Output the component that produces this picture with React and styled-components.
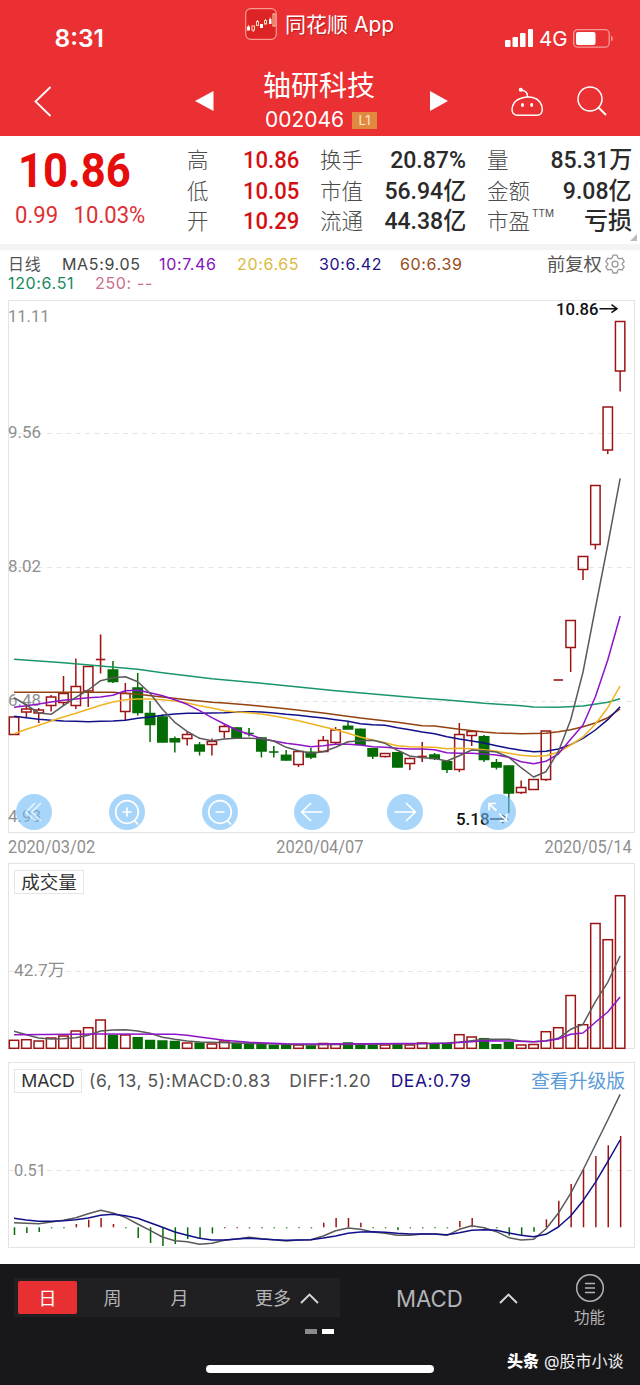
import React from 'react';
import styled, { createGlobalStyle } from 'styled-components';

const GlobalStyle = createGlobalStyle`
  * { box-sizing: border-box; }
  body { margin: 0; background: #fff; }
`;

const ui = "Inter, 'Noto Sans CJK SC', sans-serif";
const din = "Roboto, 'Noto Sans CJK SC', sans-serif";

const RED = '#9c1414';
const GREEN = '#046c04';
const STEP = 12.37;
const xAt = (i) => 14 + i * STEP;

const Screen = styled.div`
  width: 640px;
  height: 1385px;
  display: flex;
  flex-direction: column;
  background: #fff;
  font-family: ${ui};
  overflow: hidden;
  white-space: nowrap;
`;

/* ---------- header ---------- */

const Header = styled.header`
  height: 136px;
  flex: none;
  background: #ea3033;
  color: #fff;
  display: flex;
  flex-direction: column;
`;

const StatusBar = styled.div`
  height: 64px;
  display: grid;
  grid-template-columns: 245px 259px 1fr;
`;

const Clock = styled.div`
  padding: 24px 0 0 54.5px;
  font-size: 24.5px;
  line-height: 29px;
  font-weight: 600;
`;

const Brand = styled.div`
  display: flex;
  align-items: flex-start;
  gap: 8px;
  padding-top: 8px;
`;

const BrandName = styled.span`
  font-size: 21px;
  line-height: 33px;
  text-shadow: 1px 1px 1px rgba(90, 0, 0, 0.35);
`;

const Signals = styled.div`
  display: flex;
  align-items: flex-start;
  padding-top: 28px;
`;

const Network = styled.span`
  font-size: 20.5px;
  line-height: 22px;
  width: 28px;
  margin: 0 6px 0 5px;
`;

const NavBar = styled.div`
  height: 72px;
  display: grid;
  grid-template-columns: 34px 161px 68px 112px 55px 81px 66px 1fr;
`;

const NavIcon = styled.svg`
  display: block;
  grid-column: ${(p) => p.$col};
  margin-top: ${(p) => p.$top}px;
  overflow: visible;
`;

const StockTitle = styled.div`
  grid-column: 4;
  display: flex;
  flex-direction: column;
  align-items: center;
`;

const StockName = styled.div`
  margin-top: 6px;
  font-size: 28px;
  line-height: 33px;
`;

const StockCode = styled.div`
  display: flex;
  align-items: center;
  margin: 4px -4px 0 0;
  font-size: 21px;
  line-height: 26px;
  gap: 8px;
`;

const LevelBadge = styled.span`
  width: 25px;
  height: 17px;
  background: #e0893f;
  color: #ffe9cf;
  font-size: 13px;
  line-height: 17px;
  text-align: center;
`;

/* ---------- quote ---------- */

const Quote = styled.section`
  height: 108px;
  flex: none;
  display: grid;
  grid-template-columns: 187px 112px 167px 166px;
  position: relative;
  font-family: ${din};
`;

const PriceBlock = styled.div`
  display: flex;
  flex-direction: column;
`;

const Squeeze = styled.span`
  display: inline-block;
  transform: scaleX(${(p) => p.$x});
  transform-origin: ${(p) => p.$origin || 'right'} center;
`;

const Price = styled.div`
  margin: 6px 0 0 18px;
  font-size: 49px;
  line-height: 58px;
  font-weight: 700;
  color: #e60d0d;
`;

const Change = styled.div`
  margin: 1px 0 0 15px;
  font-size: 23px;
  line-height: 30px;
  font-weight: 400;
  color: #dd3035;
  word-spacing: 10.5px;
`;

const StatColumn = styled.div`
  display: flex;
  flex-direction: column;
  padding: 8px 0 0 ${(p) => p.$indent || 0}px;
`;

const Stat = styled.div`
  display: flex;
  justify-content: space-between;
  height: 30.7px;
  line-height: 33px;
`;

const StatLabel = styled.span`
  font-size: 21.5px;
  font-weight: 300;
  color: #4c4c4c;
  sup {
    font: 10px/10px ${ui};
    margin-left: 2px;
    vertical-align: 12px;
  }
`;

const StatValue = styled.span`
  font-size: 24px;
  line-height: 32px;
  font-weight: 500;
  color: ${(p) => (p.$up ? '#d40f14' : '#2a2a2a')};
`;

const Corner = styled.i`
  position: absolute;
  right: 3px;
  bottom: 3px;
  border-left: 7px solid transparent;
  border-bottom: 7px solid #bbb;
`;

const Divider = styled.div`
  height: 6px;
  flex: none;
  background: #f4f4f4;
`;

/* ---------- moving averages ---------- */

const Averages = styled.section`
  height: 50px;
  flex: none;
  padding: 4px 0 0 8px;
  font-size: 16px;
`;

const AverageRow = styled.div`
  display: flex;
  height: 19px;
  line-height: 20px;
`;

const Average = styled.span`
  width: ${(p) => p.$w}px;
  color: ${(p) => p.$c};
  letter-spacing: 0.65px;
`;

const Adjust = styled.span`
  display: flex;
  align-items: center;
  gap: 3px;
  color: #555;
  font-size: 18.3px;
`;

/* ---------- panels ---------- */

const Panel = styled.section`
  position: relative;
  flex: none;
  margin-left: 8px;
  width: 627px;
  height: ${(p) => p.$h}px;
`;

const Plot = styled.svg`
  display: block;
  overflow: visible;
`;

const Controls = styled.div`
  position: absolute;
  left: 8px;
  bottom: 3px;
  display: flex;
  gap: 56.8px;
`;

const RoundButton = styled.button`
  width: 36px;
  height: 36px;
  flex: none;
  padding: 0;
  border: 0;
  border-radius: 50%;
  background: rgba(110, 187, 247, 0.6);
  svg { display: block; }
`;

const Dates = styled.div`
  height: 30px;
  flex: none;
  display: flex;
  justify-content: space-between;
  padding: 0 8px 0 8px;
  font: 18px/28px ${din};
  color: #8f8f8f;
`;

const Legend = styled.div`
  position: absolute;
  left: 6px;
  right: 10px;
  top: 7px;
  height: 24px;
  display: flex;
  align-items: center;
  font-size: 17.5px;
  line-height: 22px;
  color: #555;
`;

const Tag = styled.span`
  height: 24px;
  width: ${(p) => p.$w}px;
  border: 1px solid #e6e6e6;
  font-size: ${(p) => p.$size}px;
  line-height: 22px;
  text-align: center;
  color: #333;
`;

const LegendItem = styled.span`
  margin-left: ${(p) => p.$ml}px;
  color: ${(p) => p.$c || '#555'};
  letter-spacing: 0.55px;
`;

const Upgrade = styled.a`
  margin: 2px 0 0 auto;
  color: #5a9bd8;
  font-size: 18.8px;
`;

const Gap = styled.div`
  height: 13px;
  flex: none;
`;

/* ---------- footer ---------- */

const Footer = styled.footer`
  margin-top: 16px;
  height: 121px;
  flex: none;
  background: #18181b;
  color: #b4b4b6;
  display: flex;
  flex-direction: column;
`;

const Toolbar = styled.div`
  display: flex;
  height: 64px;
`;

const Periods = styled.div`
  margin: 14px 0 0 14px;
  width: 326px;
  height: 39px;
  padding: 3px 0 0 4px;
  background: #202023;
  display: flex;
  font-size: 18px;
  line-height: 35px;
`;

const Period = styled.span`
  width: ${(p) => p.$w}px;
  height: 33px;
  text-align: center;
  border-radius: 2px;
  ${(p) => p.$on && 'background: #e83033; color: #fff;'}
`;

const More = styled.span`
  margin-left: 44px;
  height: 35px;
  display: flex;
  align-items: center;
  gap: 9px;
`;

const Indicator = styled.div`
  margin: 14px 0 0 56px;
  width: 122px;
  display: flex;
  align-items: center;
  justify-content: space-between;
  height: 40px;
  font-size: 22.2px;
  font-weight: 400;
`;

const Functions = styled.div`
  margin: 9px 0 0 56px;
  display: flex;
  flex-direction: column;
  align-items: center;
  gap: 1px;
  font-size: 15.5px;
  line-height: 28px;
  svg { flex: none; }
`;

const Pager = styled.div`
  display: flex;
  gap: 5px;
  padding-left: 305px;
  margin-top: 1px;
  height: 5px;
`;

const Dot = styled.i`
  width: 12px;
  height: 5px;
  background: ${(p) => (p.$on ? '#fff' : '#8a8a8c')};
`;

const BottomRow = styled.div`
  height: 51px;
  display: flex;
  padding-left: 206px;
`;

const HomeBar = styled.div`
  width: 228px;
  height: 8px;
  margin-top: 31px;
  border-radius: 4px;
  background: #fff;
`;

const Watermark = styled.div`
  margin: 14px 0 0 73px;
  font-size: 16px;
  line-height: 27px;
  color: #f0f0f0;
  b { color: #fff; font-weight: 900; margin-right: 5px; }
`;

/* ---------- data ---------- */

/* body top and bottom, then wick extent, in plot coordinates */
const candles = [
  ['r', 717, 734.5, 717, 734.5], ['r', 709, 712, 704, 717], ['r', 710, 713, 708, 723],
  ['r', 697, 705.5, 695, 711.5], ['r', 693.5, 702.5, 676, 706], ['r', 686.5, 705.5, 658.5, 709],
  ['r', 666.5, 691, 666.5, 707], ['+r', 659.5, 659.5, 634.5, 673.5], ['g', 670, 681.5, 661, 683],
  ['r', 693.5, 711.5, 683, 720], ['g', 688, 712.5, 673, 715.5], ['g', 713.5, 724.5, 701, 742],
  ['g', 717, 742, 714.5, 742.5], ['g', 738.8, 741.8, 736.5, 752.5], ['r', 734.5, 738.5, 731.5, 745.5],
  ['g', 745, 751, 742, 755.5], ['r', 741.5, 744.5, 738.5, 755.5], ['r', 726.5, 731.5, 725, 738.5],
  ['g', 728, 737.5, 727, 738], ['+g', 733.5, 733.5, 728, 736.5], ['g', 738, 751, 737, 757.5],
  ['+g', 752, 752, 746, 757.5], ['g', 755.3, 760, 750, 760.5], ['r', 751.5, 764.5, 750, 767],
  ['g', 752.3, 757, 748, 759], ['r', 740.5, 751.5, 736, 751.5], ['r', 730, 742.5, 727, 744],
  ['g', 726.3, 729, 722, 729.5], ['g', 729.3, 744.5, 728.5, 745], ['g', 748.7, 756, 748, 759],
  ['r', 753.5, 756.5, 753.5, 757.5], ['g', 752.7, 767, 752, 767.5], ['r', 758.5, 763.5, 757.5, 770],
  ['+r', 756.5, 756.5, 742, 762], ['g', 755, 758.5, 753, 760], ['g', 761.7, 769.3, 761, 773],
  ['r', 734.5, 769.5, 723, 772], ['r', 731.5, 735.5, 731.5, 746], ['g', 736.7, 759.5, 735, 762],
  ['g', 762.7, 767, 759, 769.5], ['g', 766, 793, 765.5, 813], ['r', 787.5, 792.5, 780.5, 794],
  ['r', 779.5, 789.5, 779.5, 789.5], ['r', 731, 779.5, 731, 781], ['+r', 680, 680, 680, 680],
  ['r', 620.5, 647.5, 620.5, 672], ['r', 556.5, 569.5, 556.5, 580], ['r', 485.5, 544.5, 485.5, 549.5],
  ['r', 407, 450, 407, 454], ['r', 321.5, 371, 321.5, 391.5],
];

const seq = (values) => values.map((y, i) => [i, y]);

const ma5 = seq([697.7, 705, 713, 714.3, 705.7, 697.3, 690, 680.7, 677.7, 676.7, 681.7, 693.3, 709.3, 722.3, 731.3, 738.3, 740.7, 739, 738.3, 738.3, 738.7, 741, 747.3, 750.7, 753.3, 751.7, 747.3, 741.7, 740.7, 740.3, 743.3, 750.3, 756, 757.7, 758.5, 761, 755.7, 750, 750.7, 752, 757.3, 767.7, 777, 771.7, 751.7, 720, 672, 608, 545, 478.3]);
const ma10 = seq([707.3, 705.7, 704, 702, 700.3, 699, 697.7, 697, 695.3, 690.7, 690.3, 692.7, 695.7, 699.7, 704.3, 710.7, 717.7, 724, 730, 734.3, 738.7, 741, 743.3, 744.7, 746.7, 745.7, 744.3, 744.3, 745, 746.7, 747.3, 748.3, 749, 749, 749.7, 752.7, 753.3, 753.3, 754, 755, 757.3, 761.7, 763.7, 761.3, 754, 739.3, 725, 696.7, 660, 616]);
const ma20 = seq([733.7, 729.3, 725.3, 721, 717, 713.3, 709.3, 705.3, 702, 699.7, 699, 699, 699.7, 701, 703, 705.7, 708, 710.7, 712, 712.7, 714, 716, 718.3, 720.7, 723.7, 726.7, 729.7, 733.3, 737, 740, 742.7, 745.7, 746.7, 747, 747.3, 748.7, 748.3, 748.7, 749.7, 751.3, 753.3, 755.3, 756.3, 755.7, 752.3, 745, 737, 724, 707.7, 686]);
const ma30 = seq([716.3, 717.7, 719.3, 720.3, 721, 721.3, 721.7, 721.3, 721, 720.3, 718.3, 717, 715.3, 714, 713.3, 713.3, 713, 712.7, 712, 711.7, 712, 713, 714.3, 715.3, 716.7, 718, 719.7, 721.3, 723.7, 724.7, 725.3, 727.7, 729.7, 732, 733.7, 736.7, 739, 741, 743, 745.7, 748.3, 750.3, 751.7, 751.3, 749, 744.7, 738.3, 730, 719.7, 706.7]);
const ma60 = [[0, 692.3], [8, 692.3], [10, 694.3], [12, 697], [14, 699.7], [16, 702.3], [17, 703], [19, 705], [22, 708.7], [25, 713], [28, 718], [31, 722.3], [33, 725.7], [34, 726], [36, 729.3], [38, 732], [39, 733], [41, 733.7], [43, 733.3], [44, 731.7], [45, 729.7], [46, 726.7], [47, 723], [48, 717.7], [49, 709]];
const ma120 = [[0, 659.3], [4, 662.7], [10, 669.3], [12, 672.7], [16, 678.7], [20, 683.3], [26, 690.7], [33, 698.3], [35, 700], [38, 703.3], [41, 705.7], [42, 707], [44, 707.3], [46, 706], [48, 702.3], [49, 698.7]];

const volumes = [1040.3, 1039.7, 1041, 1038, 1036, 1031, 1027.7, 1020, 1035.5, 1035, 1037.7, 1040.5, 1041, 1041.5, 1043, 1043.2, 1044, 1041, 1043.5, 1043.5, 1044.5, 1045.5, 1045.3, 1045, 1046, 1043.5, 1044, 1043, 1045, 1045.5, 1045, 1044.5, 1045, 1043, 1044.5, 1043.5, 1034.7, 1037, 1038.7, 1044.7, 1042.7, 1045, 1044.5, 1031.7, 1027.7, 995.5, 1024.7, 923.5, 939.7, 895.7];
const vol5 = [[0, 1031.3], [1, 1034.7], [2, 1038], [3, 1039], [4, 1038.7], [5, 1037.7], [6, 1035.3], [7, 1031], [8, 1030], [9, 1029.7], [10, 1031], [11, 1033.3], [12, 1037.3], [13, 1039.3], [14, 1041], [15, 1042], [18, 1043], [22, 1044.3], [24, 1044.7], [33, 1043.7], [35, 1043], [36, 1042], [37, 1040.7], [38, 1039.3], [40, 1039.3], [41, 1041], [42, 1041.7], [43, 1040.7], [44, 1038.3], [45, 1029.3], [46, 1024.3], [47, 1001.7], [48, 982.3], [49, 956]];
const vol10 = [[0, 1034.7], [7, 1034], [13, 1034.3], [14, 1035.3], [15, 1037], [17, 1040.3], [19, 1042.3], [22, 1043.7], [25, 1044], [35, 1043.3], [37, 1041.7], [38, 1040.7], [40, 1041], [42, 1041.7], [43, 1041], [44, 1039], [45, 1034.3], [46, 1033], [47, 1022.3], [48, 1012], [49, 997]];

const ZERO = 1227.3;
const macdBars = [1235, 1233, 1232, 1228.3, 1228.3, 1224, 1219.7, 1218, 1224, 1228.3, 1238, 1243, 1246, 1244, 1239, 1239, 1233.5, -1, -1, 1228.3, 1228.3, 1228.3, 1228.3, 1228.3, 1228.3, 1222.7, 1218, 1218, 1222.7, 1228.3, 1228.3, 1230, 1228.3, 1228.3, 1228.3, 1228.3, 1221, 1218, 1228.3, 1228.3, 1235.7, 1235.7, 1231.7, 1219.3, 1200.7, 1184, 1169, 1156, 1145.3, 1136];
const diff = seq([1222.7, 1223.3, 1223.7, 1222, 1220.3, 1217.7, 1213.7, 1210.3, 1213, 1217.3, 1224, 1230.3, 1237, 1240.7, 1241.7, 1244.3, 1243.3, 1240.3, 1239, 1237.3, 1238.7, 1239.7, 1241, 1240, 1239.7, 1236, 1230.7, 1228, 1229.3, 1232, 1233.3, 1235.3, 1235.3, 1234, 1234, 1235.3, 1229.3, 1225.7, 1227.7, 1231.7, 1237.7, 1240, 1239.3, 1229, 1213.3, 1193.3, 1170, 1145, 1120, 1094.3]);
const dea = seq([1218.3, 1220, 1221.3, 1221.3, 1220.7, 1219.7, 1218, 1215.3, 1214.3, 1215.7, 1218.3, 1222.7, 1227.3, 1232, 1235.3, 1238.3, 1240, 1240, 1239, 1238.3, 1239, 1239.7, 1240.3, 1240, 1239.7, 1238, 1236, 1233.3, 1232, 1231.7, 1232.3, 1233.3, 1234, 1234, 1234, 1234.7, 1232.7, 1230.3, 1229.7, 1230.3, 1233, 1235.3, 1236.7, 1234.3, 1227, 1216, 1200.7, 1182.3, 1161.7, 1140]);

/* ---------- chart pieces ---------- */

function Line({ data, color, width = 1.5 }) {
  return (
    <polyline
      points={data.map(([i, y]) => `${xAt(i)},${y}`).join(' ')}
      fill="none" stroke={color} strokeWidth={width} strokeLinejoin="round"
    />
  );
}

function GridLine({ y }) {
  return <line x1="9" x2="634" y1={y} y2={y} stroke="#e4e4e4" strokeDasharray="5 4.5" />;
}

function Frame({ y, h }) {
  return <rect x="8.5" y={y + 0.5} width="626" height={h - 1} fill="none" stroke="#e4e4e4" />;
}

function AxisLabel({ x = 8, y, w, children, color = '#8f8f8f', weight = 400, size = 17 }) {
  return (
    <text x={x} y={y} fontFamily={din} fontSize={size} fontWeight={weight} fill={color}
      textLength={w} lengthAdjust="spacingAndGlyphs">{children}</text>
  );
}

function Candle({ i, c }) {
  const [kind, top, bottom, high, low] = c;
  const x = xAt(i);
  const color = kind.includes('r') ? RED : GREEN;
  if (kind[0] === '+') {
    return (
      <g stroke={color} strokeWidth="1.6">
        <line x1={x - 4.7} x2={x + 4.7} y1={top} y2={top} />
        <line x1={x} x2={x} y1={high} y2={low} />
      </g>
    );
  }
  return (
    <g stroke={color} strokeWidth="1.5">
      <line x1={x} x2={x} y1={high} y2={top} />
      <line x1={x} x2={x} y1={bottom} y2={low} />
      <rect x={x - 4.7} y={top} width="9.4" height={bottom - top} fill={kind === 'g' ? GREEN : 'none'} />
    </g>
  );
}

function Caret({ w = 19 }) {
  return (
    <svg width={w} height="11" viewBox="0 0 19 11" fill="none" stroke="#d5d5d5" strokeWidth="2">
      <path d="M1 10 9.5 1.6 18 10" />
    </svg>
  );
}

const controlIcons = [
  <path key="a" d="M19 9 10 18l9 9M25 9l-9 9 9 9" opacity=".7" />,
  <g key="b"><circle cx="18" cy="18" r="11.3" /><path d="m25 26 4 4.5M13.5 18h9M18 13.5v9" /></g>,
  <g key="c"><circle cx="18" cy="18" r="11.3" /><path d="m25 26 4 4.5M13.5 18h9" /></g>,
  <path key="d" d="M28.5 18H8M17 9l-9.3 9 9.3 9" />,
  <path key="e" d="M7.5 18H28M19 9l9.3 9-9.3 9" />,
  <path key="f" d="m9 10 7.5 6.5M9 16.5V9.5h7M19 19.5l7.5 7M19.5 27H26.5V20" />,
];

export default function App() {
  return (
    <Screen>
      <GlobalStyle />
      <Header>
        <StatusBar>
          <Clock>8:31</Clock>
          <Brand>
            <svg width="32" height="32" viewBox="0 0 32 32">
              <rect x=".7" y=".7" width="30.6" height="30.6" rx="5" fill="#dc2426" stroke="#f79a90" strokeWidth="1.2" />
              <g fill="#fff">
                <rect x="2" y="18.5" width="3" height="4" /><rect x="15" y="16" width="3" height="4" />
                <rect x="24" y="11" width="2.5" height="5" />
              </g>
              <g fill="none" stroke="#ffd9b8" strokeWidth="1">
                <rect x="7" y="18" width="2.5" height="4" /><rect x="11.5" y="13.5" width="2" height="4" />
                <rect x="19.5" y="12.5" width="2" height="3.5" /><rect x="28" y="6" width="2" height="12" />
                <path d="M8.2 22v2M12.5 12v1.5M20.5 11v1.5M3.5 17v1.5M25.2 9.5V11" />
              </g>
            </svg>
            <BrandName>同花顺 App</BrandName>
          </Brand>
          <Signals>
            <svg width="30" height="20" viewBox="0 0 30 20" fill="#fff">
              <rect x="1" y="12" width="5.5" height="7" rx="1" /><rect x="8.5" y="9" width="5.5" height="10" rx="1" />
              <rect x="16" y="5" width="5.5" height="14" rx="1" /><rect x="24" y="1" width="5" height="18" rx="1" />
            </svg>
            <Network>4G</Network>
            <svg width="42" height="20" viewBox="0 0 42 20">
              <rect x=".7" y="1.7" width="35.5" height="17.5" rx="4" fill="none" stroke="#f39a98" strokeWidth="1.3" />
              <rect x="3" y="4" width="19.5" height="13" rx="2" fill="#fff" />
              <path d="M38.5 8v5q1.8-2.5 0-5Z" fill="#f39a98" stroke="#f39a98" />
            </svg>
          </Signals>
        </StatusBar>
        <NavBar>
          <NavIcon $col={2} $top={22} width="18" height="32" viewBox="0 0 18 32">
            <path d="M16.5 1 1.5 15.5 16.5 30" fill="none" stroke="#fff" strokeWidth="1.8" />
          </NavIcon>
          <NavIcon $col={3} $top={27} width="19" height="20" viewBox="0 0 19 20"><path d="M0 10 18.5 0v20Z" fill="#fff" /></NavIcon>
          <StockTitle>
            <StockName>轴研科技</StockName>
            <StockCode>002046 <LevelBadge>L1</LevelBadge></StockCode>
          </StockTitle>
          <NavIcon $col={6} $top={27} width="18" height="20" viewBox="0 0 18 20"><path d="M18 10 0 0v20Z" fill="#fff" /></NavIcon>
          <NavIcon $col={7} $top={23} width="33" height="30" viewBox="0 0 33 30" fill="none" stroke="#fff" strokeWidth="1.5">
            <path d="M10 11.2C15 9.7 20 9.8 22.5 10.8 27.5 12 31.5 17 31.3 22.5Q31 28.3 26 28.3H6.5Q1.2 28.3 1 22.5C1 17 5 12.5 10 11.2ZM16.5 10.3C17 6 14.5 3.7 10.5 3.3" />
            <circle cx="9.8" cy="2.8" r="1.3" fill="#fff" />
            <ellipse cx="11.5" cy="18" rx="1.5" ry="2" fill="#fff" stroke="none" /><ellipse cx="20.7" cy="18" rx="1.5" ry="2" fill="#fff" stroke="none" />
          </NavIcon>
          <NavIcon $col={8} $top={22} width="30" height="30" viewBox="0 0 30 30" fill="none" stroke="#fff" strokeWidth="1.5">
            <circle cx="13" cy="13" r="12" /><path d="m21.5 21.5 7.5 7.5" strokeWidth="2" />
          </NavIcon>
        </NavBar>
      </Header>

      <Quote>
        <PriceBlock>
          <Price><Squeeze $x={0.89} $origin="left">10.86</Squeeze></Price>
          <Change><Squeeze $x={0.96} $origin="left">0.99 10.03%</Squeeze></Change>
        </PriceBlock>
        <StatColumn>
          {[['高', '10.86'], ['低', '10.05'], ['开', '10.29']].map(([k, v]) => (
            <Stat key={k}><StatLabel>{k}</StatLabel><StatValue $up><Squeeze $x={0.92}>{v}</Squeeze></StatValue></Stat>
          ))}
        </StatColumn>
        <StatColumn $indent={21}>
          {[['换手', '20.87%'], ['市值', '56.94亿'], ['流通', '44.38亿']].map(([k, v]) => (
            <Stat key={k}><StatLabel>{k}</StatLabel><StatValue><Squeeze $x={0.96}>{v}</Squeeze></StatValue></Stat>
          ))}
        </StatColumn>
        <StatColumn $indent={21}>
          {[['量', '85.31万'], ['金额', '9.08亿'], ['市盈', '亏损']].map(([k, v]) => (
            <Stat key={k}>
              <StatLabel>{k}{k === '市盈' && <sup>TTM</sup>}</StatLabel>
              <StatValue><Squeeze $x={k === '市盈' ? 1 : 0.96}>{v}</Squeeze></StatValue>
            </Stat>
          ))}
        </StatColumn>
        <Corner />
      </Quote>
      <Divider />

      <Averages>
        <AverageRow>
          <Average $w={54} $c="#555">日线</Average>
          <Average $w={97} $c="#444">MA5:9.05</Average>
          <Average $w={78} $c="#8312b8">10:7.46</Average>
          <Average $w={82} $c="#dbb93c">20:6.65</Average>
          <Average $w={81} $c="#1d1288">30:6.42</Average>
          <Average $w={147} $c="#984a17">60:6.39</Average>
          <Adjust>
            前复权
            <svg width="20" height="20" viewBox="0 0 20 20" fill="none" stroke="#999" strokeWidth="1.3" strokeLinejoin="round">
              <path d="M8 1.2h4l.8 2.7 1.7 1 2.7-.7 2 3.4-2 1.9v1.2l2 1.9-2 3.4-2.7-.7-1.7 1-.8 2.7H8l-.8-2.7-1.7-1-2.7.7-2-3.4 2-1.9V9.5l-2-1.900 2-3.400 2.700.7 1.700-1Z" />
              <circle cx="10" cy="10.1" r="3" />
            </svg>
          </Adjust>
        </AverageRow>
        <AverageRow>
          <Average $w={87} $c="#168a60">120:6.51</Average>
          <Average $w={80} $c="#c9708a">250: --</Average>
        </AverageRow>
      </Averages>

      <Panel $h={533}>
        <Plot width="627" height="533" viewBox="8 300 627 533">
          <Frame y={300} h={533} />
          <GridLine y={433.5} /><GridLine y={567.5} /><GridLine y={701.5} />
          <AxisLabel y={322} w={41.5}>11.11</AxisLabel>
          <AxisLabel y={438} w={33}>9.56</AxisLabel>
          <AxisLabel y={572} w={33}>8.02</AxisLabel>
          <AxisLabel y={706} w={33}>6.48</AxisLabel>
          <AxisLabel y={822} w={33}>4.93</AxisLabel>
          {candles.map((c, i) => <Candle key={i} i={i} c={c} />)}
          <Line data={ma120} color="#1a9668" />
          <Line data={ma60} color="#93420f" />
          <Line data={ma30} color="#10108a" />
          <Line data={ma20} color="#eeb422" />
          <Line data={ma10} color="#8f14c8" />
          <Line data={ma5} color="#5a5a5a" />
          <AxisLabel x={556} y={315} w={42.5} color="#111" weight={500}>10.86</AxisLabel>
          <AxisLabel x={456} y={825} w={33.5} color="#111" weight={500}>5.18</AxisLabel>
          <g fill="none" stroke="#111" strokeWidth="1.5">
            <path d="M599.5 308.7H616.5M611.5 304.7l5.5 4-5.5 4M490 819h17M502 815l5.5 4-5.5 4" />
          </g>
        </Plot>
        <Controls>
          {controlIcons.map((icon, i) => (
            <RoundButton key={i}>
              <svg width="36" height="36" viewBox="0 0 36 36" fill="none" stroke="#fff" strokeWidth="1.7">{icon}</svg>
            </RoundButton>
          ))}
        </Controls>
      </Panel>
      <Dates>
        <Squeeze $x={0.91} $origin="left">2020/03/02</Squeeze>
        <Squeeze $x={0.91} $origin="center">2020/04/07</Squeeze>
        <Squeeze $x={0.91}>2020/05/14</Squeeze>
      </Dates>

      <Panel $h={186}>
        <Plot width="627" height="186" viewBox="8 863 627 186">
          <Frame y={863} h={186} />
          <GridLine y={971.5} />
          <AxisLabel x={14} y={976} w={51}>42.7万</AxisLabel>
          {volumes.map((y, i) => {
            const green = candles[i][0].includes('g');
            const half = green ? 4.4 : 4.7;
            return (
              <rect key={i} x={xAt(i) - half} y={y} width={half * 2} height={1048.3 - y}
                fill={green ? GREEN : 'none'} stroke={green ? GREEN : RED} strokeWidth="1.5" />
            );
          })}
          <Line data={vol5} color="#5a5a5a" />
          <Line data={vol10} color="#8f14c8" />
        </Plot>
        <Legend><Tag $w={70} $size={18.5}>成交量</Tag></Legend>
      </Panel>
      <Gap />

      <Panel $h={186}>
        <Plot width="627" height="186" viewBox="8 1062 627 186">
          <Frame y={1062} h={186} />
          <GridLine y={1170.5} />
          <AxisLabel x={14} y={1175.5} w={32}>0.51</AxisLabel>
          {macdBars.map((y, i) => {
            const end = y < 0 ? 1228.3 : y;
            const red = y < ZERO;
            return <line key={i} x1={xAt(i) + 0.5} x2={xAt(i) + 0.5} y1={ZERO} y2={end} stroke={red ? RED : GREEN} strokeWidth="1.5" />;
          })}
          <Line data={diff} color="#5a5a5a" />
          <Line data={dea} color="#10108a" />
        </Plot>
        <Legend>
          <Tag $w={68} $size={17.8}>MACD</Tag>
          <LegendItem $ml={7}>(6, 13, 5):MACD:0.83</LegendItem>
          <LegendItem $ml={18.5}>DIFF:1.20</LegendItem>
          <LegendItem $ml={19.5} $c="#1d1288">DEA:0.79</LegendItem>
          <Upgrade>查看升级版</Upgrade>
        </Legend>
      </Panel>

      <Footer>
        <Toolbar>
          <Periods>
            <Period $w={59} $on>日</Period>
            <Period $w={71}>周</Period>
            <Period $w={63}>月</Period>
            <More>更多 <Caret /></More>
          </Periods>
          <Indicator>MACD <Caret /></Indicator>
          <Functions>
            <svg width="30" height="30" viewBox="0 0 30 30" fill="none" stroke="#b4b4b6" strokeWidth="1.5">
              <circle cx="15" cy="15" r="13.3" /><path d="M10 10.5h10M10 15h10M10 19.5h10" />
            </svg>
            功能
          </Functions>
        </Toolbar>
        <Pager><Dot /><Dot $on /></Pager>
        <BottomRow>
          <HomeBar />
          <Watermark><b>头条</b>@股市小谈</Watermark>
        </BottomRow>
      </Footer>
    </Screen>
  );
}
